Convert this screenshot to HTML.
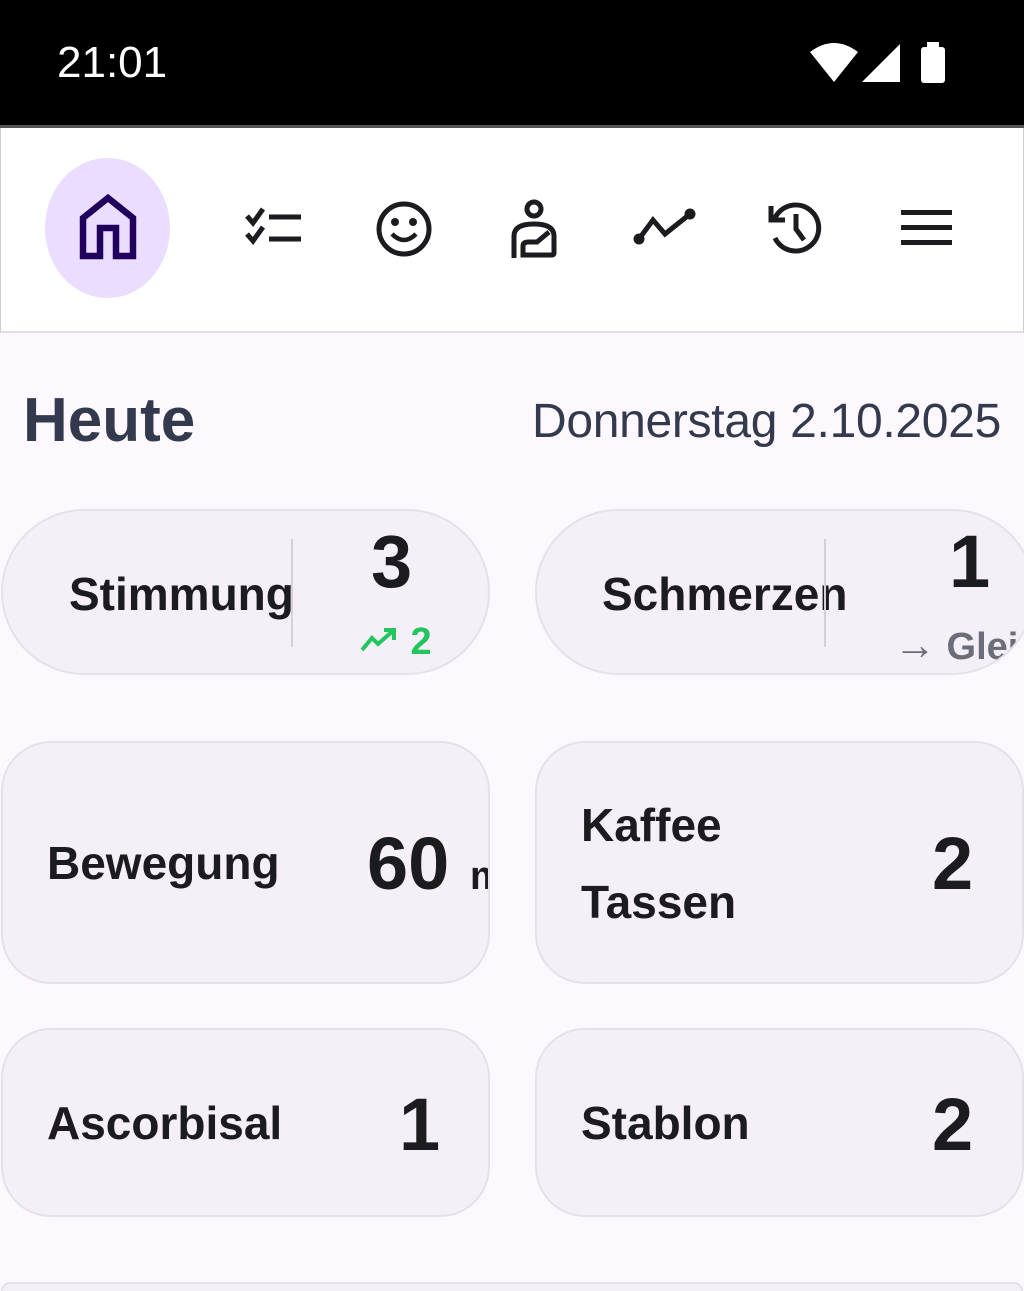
<!DOCTYPE html>
<html><head><meta charset="utf-8"><style>
*{margin:0;padding:0;box-sizing:border-box}
html,body{width:1024px;height:1291px;overflow:hidden}
body{background:#fdf8fd;font-family:"Liberation Sans",sans-serif;position:relative;color:#1c1b1f}
.sb{position:absolute;left:0;top:0;width:1024px;height:125px;background:#000}
.sb .t{position:absolute;left:57px;top:38px;color:#fff;font-size:44px;}
.line{position:absolute;left:0;top:125px;width:1024px;height:3px;background:#555}
.nav{position:absolute;left:0;top:128px;width:1024px;height:205px;background:#fff;border-bottom:2px solid #e2dfe3;border-left:1px solid #ccc;border-right:1px solid #ccc}
.pill{position:absolute;left:44px;top:30px;width:125px;height:140px;border-radius:62px/70px;background:#eaddff}
.ic{position:absolute}
.card{position:absolute;background:#f5f0f7;border:2px solid #e6e1e8;overflow:hidden}
.lbl{position:absolute;font-weight:bold;font-size:46px;color:#1c1b1f;white-space:nowrap}
.num{position:absolute;font-weight:bold;font-size:74px;color:#1c1b1f;white-space:nowrap}
</style></head><body>
<div class="sb"><div class="t">21:01</div>
<svg style="position:absolute;left:808px;top:40px" width="145" height="46" viewBox="0 0 145 46">
<path d="M2 12 Q26 -6 50 12 L26 42 Z" fill="#fff"/>
<path d="M54 42 L92 4 L92 42 Z" fill="#fff"/>
<rect x="113" y="7" width="24" height="36" rx="3" fill="#fff"/><rect x="119" y="2" width="12" height="6" fill="#fff"/>
</svg></div>
<div class="line"></div>
<div class="nav">
<div class="pill"></div>
<svg class="ic" style="left:78px;top:66px" width="58" height="66" viewBox="0 0 58 66"><path d="M4 62 V24 L29 4 L54 24 V62 H37 V34 H21 V62 Z" fill="none" stroke="#21005d" stroke-width="6.5"/></svg>
<svg class="ic" style="left:242px;top:78px" width="60" height="42" viewBox="0 0 60 42" fill="none" stroke="#1c1b1f" stroke-width="5"><path d="M4 10 L10 17 L20 3"/><path d="M4 28 L10 35 L20 21"/><path d="M26 11 H58 M26 33 H58"/></svg>
<svg class="ic" style="left:374px;top:72px" width="58" height="58" viewBox="0 0 58 58"><circle cx="29" cy="29" r="25" fill="none" stroke="#1c1b1f" stroke-width="5"/><circle cx="20" cy="22" r="4" fill="#1c1b1f"/><circle cx="38" cy="22" r="4" fill="#1c1b1f"/><path d="M17 34 Q29 46 41 34" fill="none" stroke="#1c1b1f" stroke-width="4.5"/></svg>
<svg class="ic" style="left:508px;top:70px" width="50" height="62" viewBox="0 0 50 62" fill="none" stroke="#1c1b1f" stroke-width="5"><circle cx="25" cy="11" r="7"/><path d="M5 60 V38 Q5 26 25 26 Q45 26 45 38 V55 Q45 57 43 57 H14 V48 Q14 44 20 44 H28 L40 34"/></svg>
<svg class="ic" style="left:632px;top:80px" width="64" height="38" viewBox="0 0 64 38" fill="none" stroke="#1c1b1f" stroke-width="5"><path d="M6 31 L20 12 L32 26 L57 6"/><circle cx="6" cy="31" r="3" fill="#1c1b1f"/><circle cx="57" cy="6" r="3" fill="#1c1b1f"/></svg>
<svg class="ic" style="left:766px;top:72px" width="58" height="56" viewBox="0 0 58 56" fill="none" stroke="#1c1b1f" stroke-width="5"><path d="M8 18 A23 23 0 1 1 8 38"/><path d="M4 6 V20 H18"/><path d="M29 14 V29 L37 40"/></svg>
<svg class="ic" style="left:900px;top:80px" width="52" height="38" viewBox="0 0 52 38" fill="#1c1b1f"><rect x="0" y="2" width="51" height="5"/><rect x="0" y="17" width="51" height="5"/><rect x="0" y="32" width="51" height="5"/></svg>
</div>
<div style="position:absolute;left:23px;top:385px;font-size:62px;font-weight:bold;color:#333a4d">Heute</div>
<div style="position:absolute;right:23px;top:394px;font-size:48px;color:#333a4d;letter-spacing:-0.3px">Donnerstag 2.10.2025</div>

<div class="card" style="left:1px;top:509px;width:489px;height:166px;border-radius:83px">
<div class="lbl" style="left:66px;top:56px">Stimmung</div>
<div style="position:absolute;left:288px;top:28px;width:2px;height:108px;background:#d5d0d8"></div>
<div class="num" style="left:368px;top:8px">3</div>
<div style="position:absolute;left:357px;top:110px;font-size:38px;font-weight:bold;color:#22c55e;white-space:nowrap"><svg width="40" height="30" viewBox="0 0 40 30" fill="none" stroke="#22c55e" stroke-width="4"><path d="M2 26 L12 14 L18 20 L34 6 M24 6 H34 V16"/></svg> 2</div>
</div>
<div class="card" style="left:535px;top:509px;width:500px;height:166px;border-radius:83px">
<div class="lbl" style="left:65px;top:56px">Schmerzen</div>
<div style="position:absolute;left:287px;top:28px;width:2px;height:108px;background:#d5d0d8"></div>
<div class="num" style="left:412px;top:8px">1</div>
<div style="position:absolute;left:357px;top:110px;font-size:38px;font-weight:bold;color:#6b6e78;white-space:nowrap"><span style="font-size:42px">→</span> Gleich</div>
</div>

<div class="card" style="left:1px;top:741px;width:489px;height:243px;border-radius:50px">
<div class="lbl" style="left:44px;top:93px">Bewegung</div>
<div class="num" style="left:364px;top:78px">60 <span style="font-size:40px">min</span></div>
</div>
<div class="card" style="left:535px;top:741px;width:489px;height:243px;border-radius:50px">
<div class="lbl" style="left:44px;top:55px">Kaffee</div>
<div class="lbl" style="left:44px;top:132px">Tassen</div>
<div class="num" style="left:395px;top:78px">2</div>
</div>
<div class="card" style="left:1px;top:1028px;width:489px;height:189px;border-radius:50px">
<div class="lbl" style="left:44px;top:66px">Ascorbisal</div>
<div class="num" style="left:396px;top:52px">1</div>
</div>
<div class="card" style="left:535px;top:1028px;width:489px;height:189px;border-radius:50px">
<div class="lbl" style="left:44px;top:66px">Stablon</div>
<div class="num" style="left:395px;top:52px">2</div>
</div>
<div class="card" style="left:1px;top:1282px;width:1022px;height:9px;border-radius:50px 50px 0 0;border-bottom:none"></div>
</body></html>
